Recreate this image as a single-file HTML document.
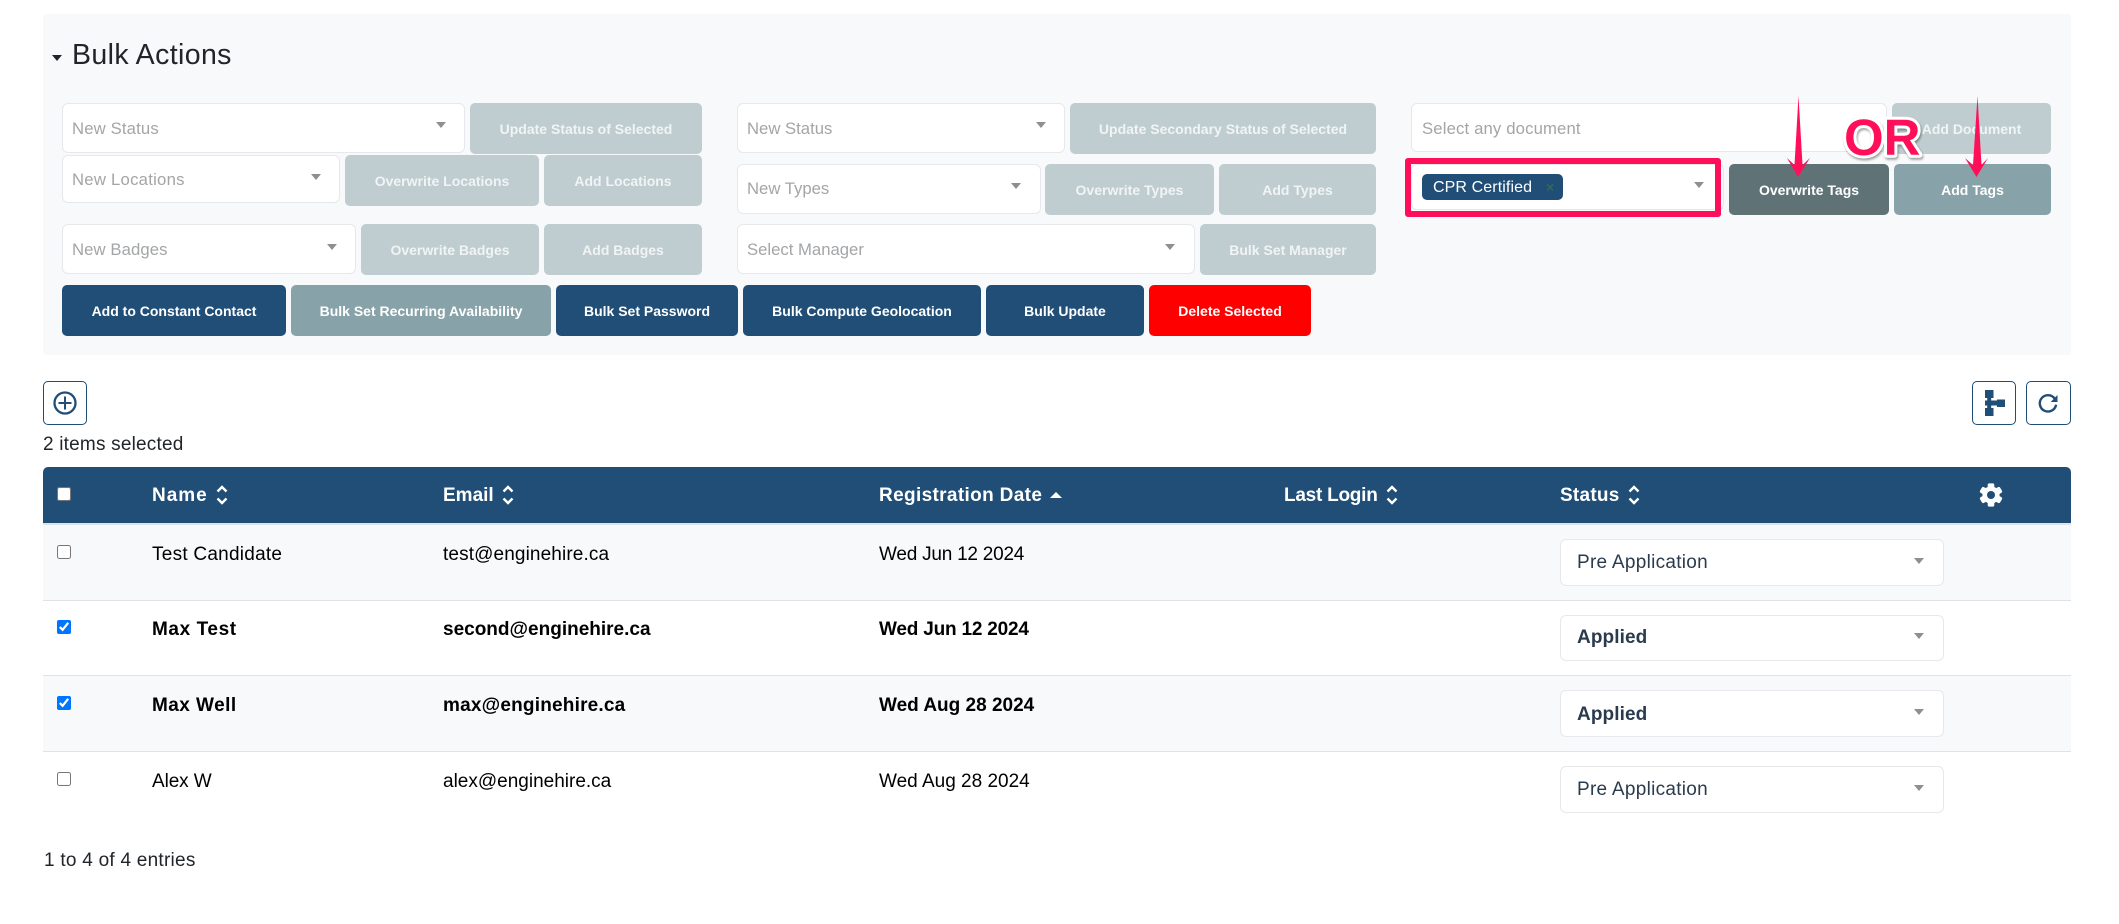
<!DOCTYPE html>
<html lang="en">
<head>
<meta charset="utf-8">
<title>Bulk Actions</title>
<style>
html,body{margin:0;padding:0;background:#fff}
body{position:relative;width:2119px;height:924px;overflow:hidden;font-family:"Liberation Sans",sans-serif;color:#212529}
div,span,input,svg{box-sizing:border-box}
.a{position:absolute}
.panel{left:43px;top:14px;width:2027.5px;height:341px;background:#f8f9fa;border-radius:4px}
.s{position:absolute;background:#fff;border:1.5px solid #e6e8eb;border-radius:6px}
.t{position:absolute;white-space:nowrap;height:24px;line-height:24px}
.ph{font-size:16.7px;color:#a3a5a7}
.c{position:absolute;width:0;height:0;border-left:5px solid transparent;border-right:5px solid transparent;border-top:6px solid #8f8f8f}
.b{position:absolute;display:flex;align-items:center;justify-content:center;font-size:14px;font-weight:700;color:#fff;border-radius:5px;padding-top:1px;white-space:nowrap}
.d{background:#bfcdd0;color:#f1f4f5}
.p{background:#204e77}
.g{background:#87a2a8}
.dk{background:#5f7377}
.r{background:#ff0000}
.ib{position:absolute;top:381px;height:44px;background:#fff;border:1.5px solid #204e77;border-radius:5px}
.row{position:absolute;left:43px;width:2027.5px}
.f{font-size:19px;color:#000}
.bd{font-weight:700}
.h{font-size:19px;font-weight:700;color:#fff;top:484px}
.st{font-size:19px;color:#2b3b4e}
input[type=checkbox]{position:absolute;margin:0;width:14px;height:14px;left:57px}
svg{position:absolute;overflow:visible}
</style>
</head>
<body>

<div class="a panel"></div>
<div class="a" style="left:52px;top:55px;width:0;height:0;border-left:5.5px solid transparent;border-right:5.5px solid transparent;border-top:6px solid #212529"></div>
<div class="t" style="left:72px;top:42.5px;font-size:28.5px;letter-spacing:.38px;color:#212529">Bulk Actions</div>

<!-- Left column -->
<div class="s" style="left:62px;top:103px;width:403px;height:50px"></div>
<div class="t ph" style="left:72px;top:117px;letter-spacing:.15px">New Status</div>
<div class="c" style="left:436px;top:122px"></div>
<div class="b d" style="left:470px;top:103px;width:232px;height:51px">Update Status of Selected</div>

<div class="s" style="left:62px;top:155px;width:278px;height:48px"></div>
<div class="t ph" style="left:72px;top:168px;letter-spacing:.25px">New Locations</div>
<div class="c" style="left:311px;top:174px"></div>
<div class="b d" style="left:345px;top:155px;width:194px;height:51px">Overwrite Locations</div>
<div class="b d" style="left:544px;top:155px;width:158px;height:51px">Add Locations</div>

<div class="s" style="left:62px;top:224px;width:294px;height:50px"></div>
<div class="t ph" style="left:72px;top:238px;letter-spacing:.1px">New Badges</div>
<div class="c" style="left:327px;top:244px"></div>
<div class="b d" style="left:361px;top:224px;width:178px;height:51px">Overwrite Badges</div>
<div class="b d" style="left:544px;top:224px;width:158px;height:51px">Add Badges</div>

<!-- Middle column -->
<div class="s" style="left:737px;top:103px;width:328px;height:50px"></div>
<div class="t ph" style="left:747px;top:117px">New Status</div>
<div class="c" style="left:1036px;top:122px"></div>
<div class="b d" style="left:1070px;top:103px;width:306px;height:51px">Update Secondary Status of Selected</div>

<div class="s" style="left:737px;top:164px;width:304px;height:50px"></div>
<div class="t ph" style="left:747px;top:177px">New Types</div>
<div class="c" style="left:1011px;top:183px"></div>
<div class="b d" style="left:1045px;top:164px;width:169px;height:51px">Overwrite Types</div>
<div class="b d" style="left:1219px;top:164px;width:157px;height:51px">Add Types</div>

<div class="s" style="left:737px;top:224px;width:458px;height:50px"></div>
<div class="t ph" style="left:747px;top:238px">Select Manager</div>
<div class="c" style="left:1165px;top:244px"></div>
<div class="b d" style="left:1200px;top:224px;width:176px;height:51px">Bulk Set Manager</div>

<!-- Right column -->
<div class="s" style="left:1411px;top:103px;width:476px;height:49px"></div>
<div class="t ph" style="left:1422px;top:117px;letter-spacing:.15px">Select any document</div>
<div class="b d" style="left:1892px;top:103px;width:159px;height:51px">Add Document</div>

<div class="s" style="left:1411px;top:164px;width:313px;height:46px"></div>
<div class="a" style="left:1422px;top:174px;width:141px;height:26px;background:#204e77;border-radius:5px"></div>
<div class="t" style="left:1433px;top:176px;font-size:16px;letter-spacing:.1px;color:#fff">CPR Certified</div>
<div class="t" style="left:1546px;top:175px;font-size:14px;font-weight:700;color:#2e6b5a">×</div>
<div class="c" style="left:1694px;top:182px"></div>
<div class="b dk" style="left:1729px;top:164px;width:160px;height:51px">Overwrite Tags</div>
<div class="b g" style="left:1894px;top:164px;width:157px;height:51px">Add Tags</div>

<!-- Bottom action row -->
<div class="b p" style="left:62px;top:285px;width:224px;height:51px">Add to Constant Contact</div>
<div class="b g" style="left:291px;top:285px;width:260px;height:51px">Bulk Set Recurring Availability</div>
<div class="b p" style="left:556px;top:285px;width:182px;height:51px">Bulk Set Password</div>
<div class="b p" style="left:743px;top:285px;width:238px;height:51px">Bulk Compute Geolocation</div>
<div class="b p" style="left:986px;top:285px;width:158px;height:51px">Bulk Update</div>
<div class="b r" style="left:1149px;top:285px;width:162px;height:51px">Delete Selected</div>

<!-- Annotation overlay -->
<div class="a" style="left:1405px;top:158px;width:316px;height:59px;border:6px solid #ff0f5a;border-radius:3px"></div>
<svg style="left:0;top:0" width="2119" height="924" viewBox="0 0 2119 924">
  <text x="1844" y="155" font-family="'Liberation Sans',sans-serif" font-size="51" font-weight="700" fill="#ff0f5a" stroke="#fff" stroke-width="6" stroke-linejoin="round" paint-order="stroke" style="filter:drop-shadow(1px 2px 1px rgba(0,0,0,.35))">OR</text>
  <path d="M1798.5 96L1802.5 165L1810 158L1798 177L1787 158L1794.5 165Z" fill="#ff0f5a"/>
  <path d="M1977.5 96L1981.5 165L1988 158L1976.5 177L1965 158L1973 165Z" fill="#ff0f5a"/>
</svg>

<!-- Toolbar -->
<div class="ib" style="left:43px;width:44px"></div>
<svg style="left:43px;top:381px" width="44" height="44" viewBox="0 0 44 44">
  <circle cx="22" cy="22" r="10.5" fill="none" stroke="#204e77" stroke-width="2.3"/>
  <path d="M22 15.5V28.5M15.5 22H28.5" stroke="#204e77" stroke-width="2" fill="none"/>
</svg>
<div class="ib" style="left:1972px;width:44px"></div>
<svg style="left:1972px;top:381px" width="44" height="44" viewBox="0 0 44 44" fill="#204e77">
  <rect x="13" y="9" width="8.5" height="8"/>
  <rect x="13" y="27" width="8.5" height="8"/>
  <rect x="25" y="18.5" width="8" height="7.5"/>
  <rect x="15.2" y="17" width="4" height="10"/>
  <rect x="13" y="19.5" width="12" height="5"/>
</svg>
<div class="ib" style="left:2026px;width:44.5px"></div>
<svg style="left:2026px;top:381px" width="45" height="44" viewBox="0 0 45 44">
  <path d="M28.7 17.6A8.2 8.2 0 1 0 30.1 23.7" fill="none" stroke="#204e77" stroke-width="2.4"/>
  <path d="M31.5 14V21H24.7Z" fill="#204e77"/>
</svg>
<div class="t f" style="left:43px;top:433px;letter-spacing:.2px;color:#212529">2 items selected</div>

<!-- Table -->
<div class="a" style="left:43px;top:467px;width:2027.5px;height:56px;background:#204e77;border-radius:5px 5px 0 0"></div>
<div class="a" style="left:43px;top:523px;width:2027.5px;height:2px;background:#dde3e8"></div>
<input type="checkbox" style="top:487px">
<div class="t h" style="left:152px;letter-spacing:1px">Name</div>
<svg style="left:216px;top:484px" width="12" height="22" viewBox="0 0 12 22"><path d="M1.5 7.5L6 3L10.5 7.5M1.5 14.5L6 19L10.5 14.5" fill="none" stroke="#fff" stroke-width="2.4"/></svg>
<div class="t h" style="left:443px">Email</div>
<svg style="left:502px;top:484px" width="12" height="22" viewBox="0 0 12 22"><path d="M1.5 7.5L6 3L10.5 7.5M1.5 14.5L6 19L10.5 14.5" fill="none" stroke="#fff" stroke-width="2.4"/></svg>
<div class="t h" style="left:879px;letter-spacing:.35px">Registration Date</div>
<div class="a" style="left:1054px;top:492px;width:0;height:0;margin-left:-4px;border-left:6px solid transparent;border-right:6px solid transparent;border-bottom:6px solid #fff"></div>
<div class="t h" style="left:1284px;letter-spacing:-.25px">Last Login</div>
<svg style="left:1386px;top:484px" width="12" height="22" viewBox="0 0 12 22"><path d="M1.5 7.5L6 3L10.5 7.5M1.5 14.5L6 19L10.5 14.5" fill="none" stroke="#fff" stroke-width="2.4"/></svg>
<div class="t h" style="left:1560px;letter-spacing:.25px">Status</div>
<svg style="left:1628px;top:484px" width="12" height="22" viewBox="0 0 12 22"><path d="M1.5 7.5L6 3L10.5 7.5M1.5 14.5L6 19L10.5 14.5" fill="none" stroke="#fff" stroke-width="2.4"/></svg>
<svg style="left:1979px;top:483px" width="24" height="24" viewBox="0 0 24 24" fill="#fff">
  <circle cx="12" cy="12" r="8.6"/>
  <rect x="8.7" y="0.4" width="6.6" height="23.2" rx="1.6"/>
  <rect x="8.7" y="0.4" width="6.6" height="23.2" rx="1.6" transform="rotate(60 12 12)"/>
  <rect x="8.7" y="0.4" width="6.6" height="23.2" rx="1.6" transform="rotate(120 12 12)"/>
  <circle cx="12" cy="12" r="4" fill="#204e77"/>
</svg>

<div class="row" style="top:525px;height:75px;background:#f8f9fa"></div>
<div class="row" style="top:600px;height:1px;background:#dfe2e6"></div>
<div class="row" style="top:676px;height:75px;background:#f8f9fa"></div>
<div class="row" style="top:675px;height:1px;background:#dfe2e6"></div>
<div class="row" style="top:751px;height:1px;background:#dfe2e6"></div>

<input type="checkbox" style="top:545px">
<div class="t f" style="left:152px;top:543px;letter-spacing:.25px">Test Candidate</div>
<div class="t f" style="left:443px;top:543px;letter-spacing:.12px">test@enginehire.ca</div>
<div class="t f" style="left:879px;top:543px;letter-spacing:-.23px">Wed Jun 12 2024</div>
<div class="s" style="left:1560px;top:539px;width:384px;height:47px"></div>
<div class="t st" style="left:1577px;top:551px;letter-spacing:.28px">Pre Application</div>
<div class="c" style="left:1914px;top:558px"></div>

<input type="checkbox" checked style="top:620px">
<div class="t f bd" style="left:152px;top:618px;letter-spacing:.6px">Max Test</div>
<div class="t f bd" style="left:443px;top:618px">second@enginehire.ca</div>
<div class="t f bd" style="left:879px;top:618px;letter-spacing:-.2px">Wed Jun 12 2024</div>
<div class="s" style="left:1560px;top:615px;width:384px;height:46px"></div>
<div class="t st bd" style="left:1577px;top:626px;letter-spacing:.1px">Applied</div>
<div class="c" style="left:1914px;top:633px"></div>

<input type="checkbox" checked style="top:696px">
<div class="t f bd" style="left:152px;top:694px;letter-spacing:.45px">Max Well</div>
<div class="t f bd" style="left:443px;top:694px;letter-spacing:.2px">max@enginehire.ca</div>
<div class="t f bd" style="left:879px;top:694px">Wed Aug 28 2024</div>
<div class="s" style="left:1560px;top:690px;width:384px;height:47px"></div>
<div class="t st bd" style="left:1577px;top:703px;letter-spacing:.1px">Applied</div>
<div class="c" style="left:1914px;top:709px"></div>

<input type="checkbox" style="top:772px">
<div class="t f" style="left:152px;top:770px;letter-spacing:-.1px">Alex W</div>
<div class="t f" style="left:443px;top:770px">alex@enginehire.ca</div>
<div class="t f" style="left:879px;top:770px">Wed Aug 28 2024</div>
<div class="s" style="left:1560px;top:766px;width:384px;height:47px"></div>
<div class="t st" style="left:1577px;top:778px;letter-spacing:.28px">Pre Application</div>
<div class="c" style="left:1914px;top:785px"></div>

<div class="t f" style="left:44px;top:849px;letter-spacing:.25px;color:#212529">1 to 4 of 4 entries</div>

</body>
</html>
